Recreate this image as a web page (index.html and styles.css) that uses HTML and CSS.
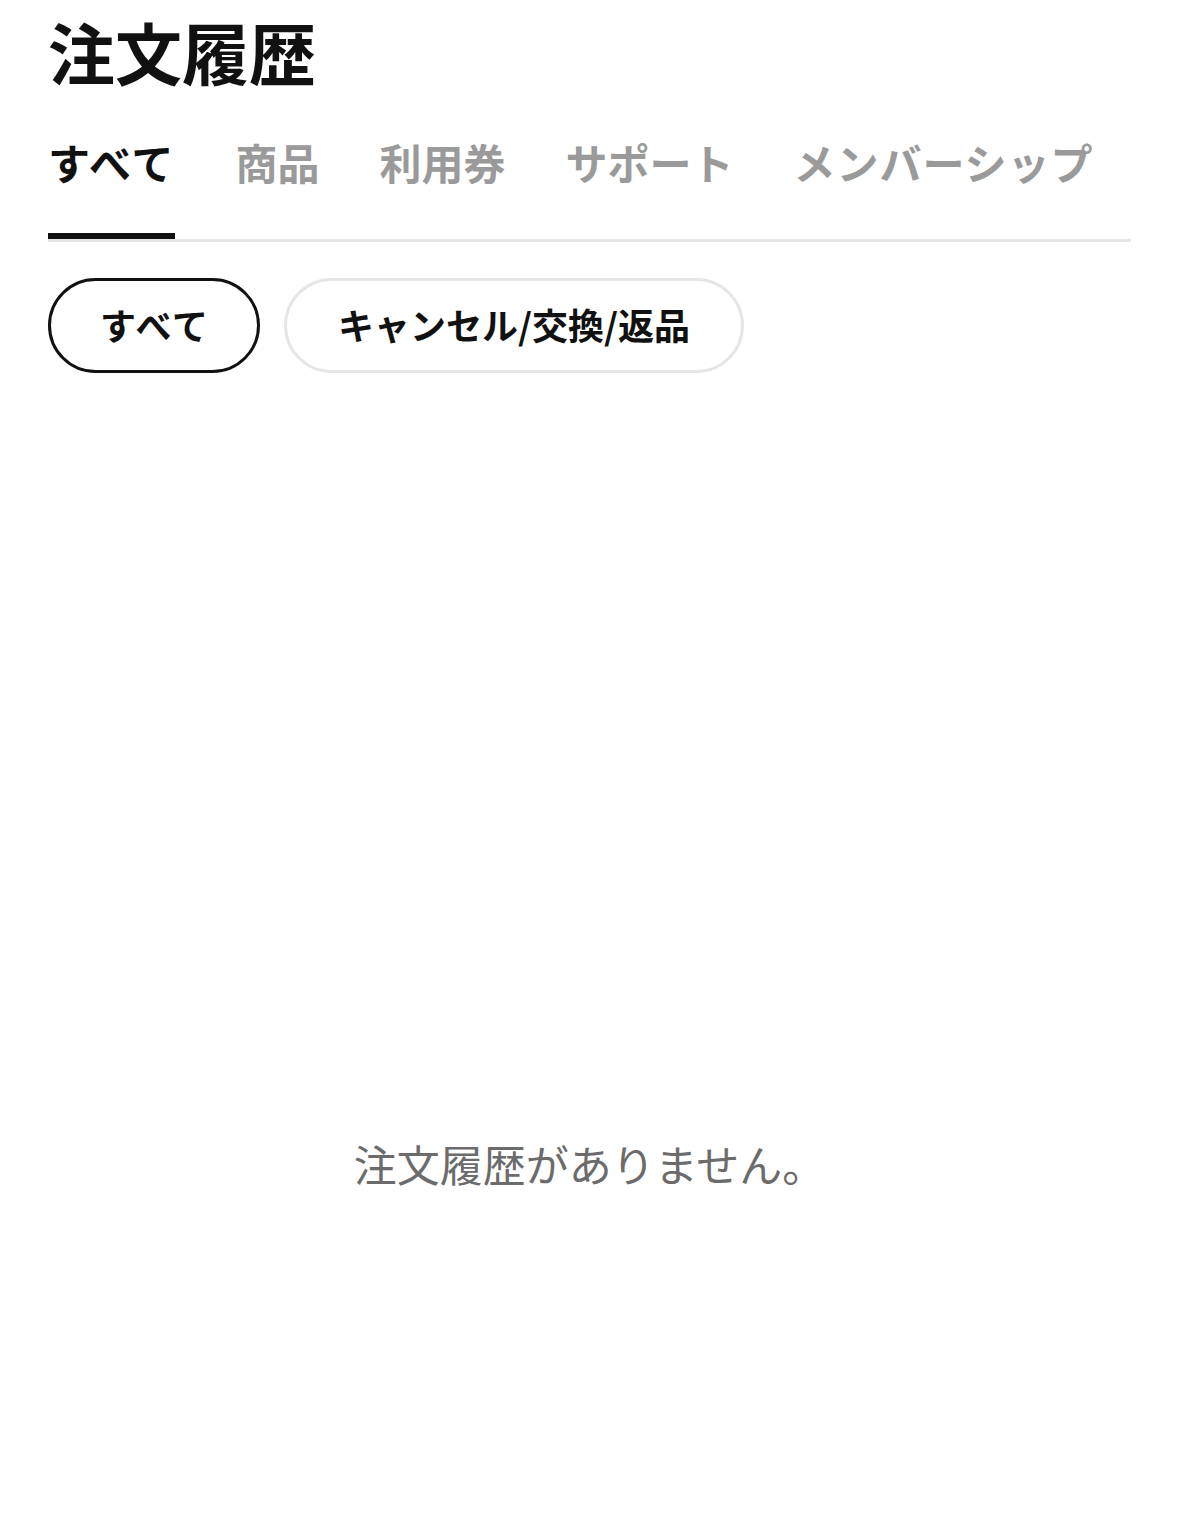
FILE: index.html
```html
<!DOCTYPE html>
<html lang="ja">
<head>
<meta charset="utf-8">
<title>注文履歴</title>
<link rel="stylesheet" href="styles.css">
</head>
<body>
<div class="page">
  <h1 class="title">注文履歴</h1>
  <nav class="tabs">
    <div class="tab active">すべて</div>
    <div class="tab">商品</div>
    <div class="tab">利用券</div>
    <div class="tab">サポート</div>
    <div class="tab wide">メンバーシップ</div>
  </nav>
  <div class="chips">
    <div class="chip selected">すべて</div>
    <div class="chip">キャンセル/交換/返品</div>
  </div>
  <div class="empty">注文履歴がありません。</div>
</div>
</body>
</html>
```
FILE: styles.css
```css
html, body {
  margin: 0;
  padding: 0;
  background: #ffffff;
}
body {
  font-family: "Noto Sans CJK JP", "Noto Sans", sans-serif;
  color: #111111;
}
.page {
  padding: 11px 48px 0 48px;
}
.title {
  margin: 0;
  font-size: 67px;
  line-height: 80px;
  font-weight: 700;
  color: #111111;
}
.tabs {
  display: flex;
  gap: 60px;
  border-bottom: 3px solid #e6e6e6;
}
.tab {
  font-size: 42px;
  line-height: 50px;
  font-weight: 700;
  color: #9a9a9a;
  padding: 46px 0;
  border-bottom: 6px solid transparent;
  white-space: nowrap;
}
.tab.active {
  color: #111111;
  border-bottom-color: #111111;
  letter-spacing: 2px;
}
.tab.wide {
  letter-spacing: 1px;
}
.chips {
  display: flex;
  gap: 24px;
  margin-top: 36px;
}
.chip {
  box-sizing: border-box;
  height: 95px;
  display: flex;
  align-items: center;
  padding: 0 51px 3px 51px;
  border: 3px solid #e6e6e6;
  border-radius: 48px;
  font-size: 36px;
  font-weight: 700;
  color: #111111;
  white-space: nowrap;
}
.chip.selected {
  border-color: #111111;
  padding: 0 47px 3px 49px;
  letter-spacing: 2px;
}
.empty {
  padding-top: 760px;
  text-align: center;
  font-size: 43px;
  line-height: 60px;
  font-weight: 400;
  color: #6b6b6b;
}
```
